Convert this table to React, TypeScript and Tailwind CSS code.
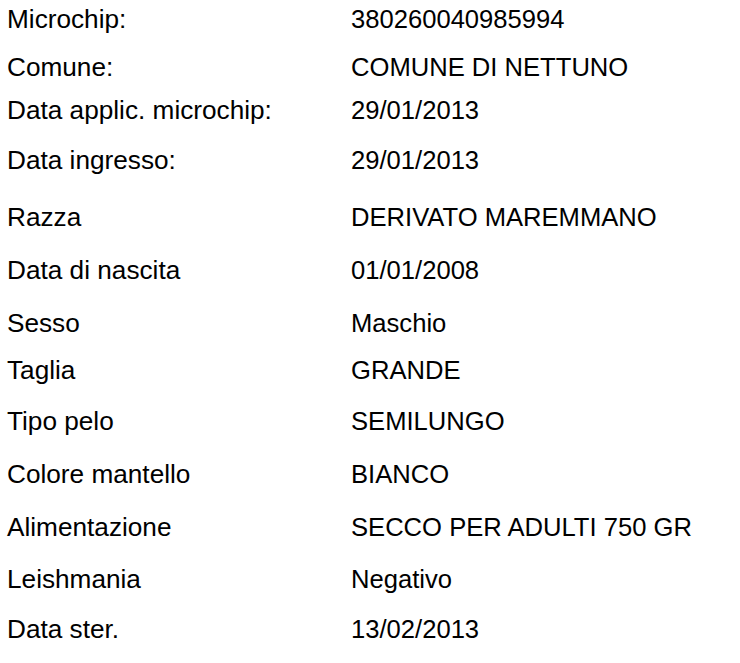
const rows: { label: string; value: string; h: string }[] = [
  { label: 'Microchip:', value: '380260040985994', h: 'h-[48px]' },
  { label: 'Comune:', value: 'COMUNE DI NETTUNO', h: 'h-[43px]' },
  { label: 'Data applic. microchip:', value: '29/01/2013', h: 'h-[50px]' },
  { label: 'Data ingresso:', value: '29/01/2013', h: 'h-[57px]' },
  { label: 'Razza', value: 'DERIVATO MAREMMANO', h: 'h-[53px]' },
  { label: 'Data di nascita', value: '01/01/2008', h: 'h-[53px]' },
  { label: 'Sesso', value: 'Maschio', h: 'h-[47px]' },
  { label: 'Taglia', value: 'GRANDE', h: 'h-[51px]' },
  { label: 'Tipo pelo', value: 'SEMILUNGO', h: 'h-[53px]' },
  { label: 'Colore mantello', value: 'BIANCO', h: 'h-[53px]' },
  { label: 'Alimentazione', value: 'SECCO PER ADULTI 750 GR', h: 'h-[52px]' },
  { label: 'Leishmania', value: 'Negativo', h: 'h-[50px]' },
  { label: 'Data ster.', value: '13/02/2013', h: 'h-[49px]' },
];

export default function App() {
  return (
    <div className="w-[740px] h-[663px] bg-white pt-[4px] text-black font-['Liberation_Sans',Arial,sans-serif] overflow-hidden">
      {rows.map((r) => (
        <div key={r.label} className={`flex items-baseline ${r.h}`}>
          <div className="w-[351px] shrink-0 pl-[7px] text-[26.2px] leading-[30px]">{r.label}</div>
          <div className="text-[25.6px] leading-[30px]">{r.value}</div>
        </div>
      ))}
    </div>
  );
}
